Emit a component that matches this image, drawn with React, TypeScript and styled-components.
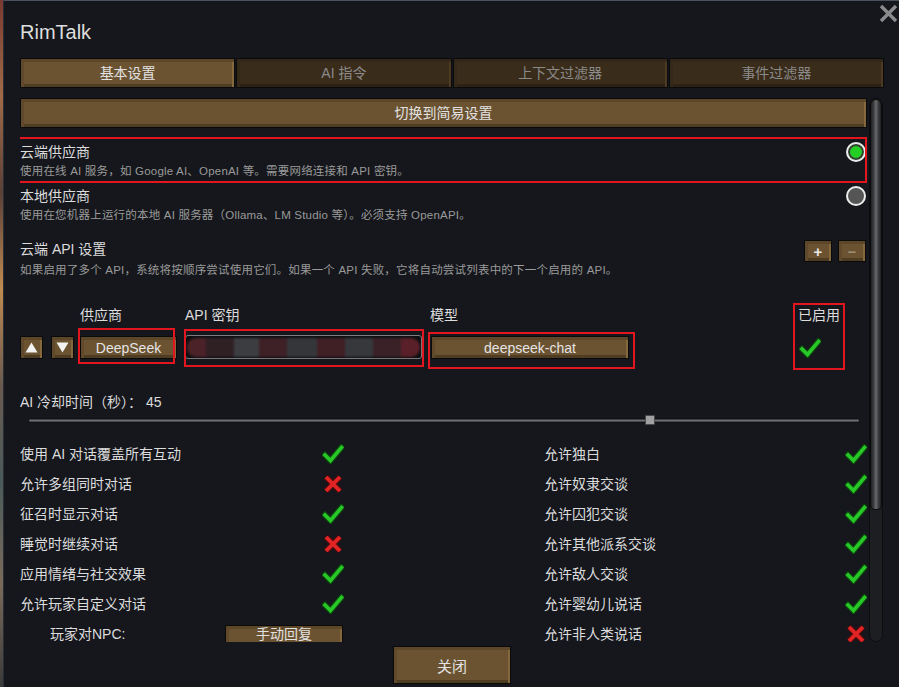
import React from "react";
import styled, { createGlobalStyle, css } from "styled-components";

const GlobalStyle = createGlobalStyle`
  html, body {
    margin: 0;
    padding: 0;
    background: #15171c;
  }
  body {
    font-family: "Liberation Sans", "Noto Sans CJK SC", sans-serif;
    color: #dcdcdc;
  }
  * {
    box-sizing: border-box;
  }
`;

const font = `"Liberation Sans", "Noto Sans CJK SC", sans-serif`;

const wood = css`
  display: flex;
  align-items: center;
  justify-content: center;
  background: #6b5331;
  border: 1px solid #0a0a0a;
  box-shadow: inset 0 3px 0 #5d4729, inset 3px 0 0 #614a2b,
    inset -2px 0 0 #86683d, inset 0 -3px 0 #4e3c23;
  color: #e2e2e2;
  font: 14px ${font};
  padding: 0;
`;

const Screen = styled.div`
  display: flex;
  width: 899px;
  height: 687px;
  overflow: hidden;
`;

const GameEdge = styled.div`
  width: 3px;
  flex: none;
  background: linear-gradient(
    180deg,
    #7a3a30 0%,
    #a06a48 14%,
    #5a4038 28%,
    #c08a50 42%,
    #6a5a50 56%,
    #4a5a5a 70%,
    #7a6a5a 85%,
    #3a3a3a 100%
  );
`;

const Window = styled.div`
  position: relative;
  flex: 1;
  display: flex;
  flex-direction: column;
  background: #15171c;
  border-top: 1px solid #4c535e;
  border-left: 1px solid #2a2e35;
  padding: 17px 15px 0 16px;
  & > * {
    flex-shrink: 0;
  }
`;

const Title = styled.div`
  font: 20px/28px ${font};
  color: #dedede;
  height: 28px;
`;

const CloseX = styled.svg`
  position: absolute;
  top: 3px;
  right: 1px;
`;

const Tabs = styled.div`
  display: grid;
  grid-template-columns: repeat(4, 1fr);
  gap: 1px;
  margin-top: 12px;
  height: 30px;
`;

const Tab = styled.div<{ $active?: boolean }>`
  ${wood};
  padding-bottom: 2px;
  background: ${(p) => (p.$active ? "#6b5331" : "#3a2c1a")};
  box-shadow: ${(p) =>
    p.$active
      ? "inset 0 3px 0 #5d4729, inset 3px 0 0 #614a2b, inset -2px 0 0 #86683d, inset 0 -3px 0 #4e3c23"
      : "inset 0 3px 0 #33261a, inset 3px 0 0 #342818, inset -2px 0 0 #4c3a22, inset 0 -3px 0 #2c2114"};
  color: ${(p) => (p.$active ? "#e2e2e2" : "#8a8a8a")};
`;

const Body = styled.div`
  display: flex;
  gap: 2px;
  margin-top: 10px;
  height: 544px;
`;

const Scroll = styled.div`
  width: 847px;
  flex: none;
  overflow: hidden;
  display: flex;
  flex-direction: column;
  & > * {
    flex-shrink: 0;
  }
`;

const ScrollTrack = styled.div`
  width: 14px;
  flex: none;
  border-radius: 7px;
  background: #1c1e22;
  border: 1px solid #0c0d0f;
  display: flex;
  flex-direction: column;
  align-items: center;
`;

const ScrollThumb = styled.div`
  width: 12px;
  height: 411px;
  border-radius: 6px 6px 5px 5px;
  background: linear-gradient(90deg, #202124 0%, #3a3b3e 25%, #6a6a6c 50%, #3a3b3e 75%, #202124 100%);
  border: 1px solid #0c0c0c;
`;

const WideButton = styled.button`
  ${wood};
  width: 100%;
  height: 30px;
  padding-bottom: 3px;
`;

const Marked = styled.div<{ $inset: string }>`
  position: relative;
  width: fit-content;
  &::after {
    content: "";
    position: absolute;
    inset: ${(p) => p.$inset};
    border: 2px solid #e3161f;
    pointer-events: none;
  }
`;

const ProviderRow = styled(Marked)<{ $gap?: number }>`
  width: auto;
  display: flex;
  justify-content: space-between;
  align-items: flex-start;
  height: 44px;
  padding-top: 3px;
  margin-top: ${(p) => p.$gap ?? 0}px;
  &::after {
    display: ${(p) => (p.$inset ? "block" : "none")};
  }
`;

const TextBlock = styled.div`
  display: flex;
  flex-direction: column;
`;

const Label = styled.div`
  font: 14px/20px ${font};
  color: #dcdcdc;
  white-space: nowrap;
`;

const Hint = styled.div<{ $gap?: number }>`
  font: 11.5px/18px ${font};
  letter-spacing: 0.2px;
  color: #9a9a9a;
  white-space: nowrap;
  margin-top: ${(p) => p.$gap ?? 0}px;
`;

const Radio = styled.span<{ $on?: boolean }>`
  width: 20px;
  height: 20px;
  margin-right: 1px;
  border-radius: 50%;
  border: 2px solid #ececec;
  background: ${(p) => (p.$on ? "#22cf22" : "#555556")};
  box-shadow: ${(p) => (p.$on ? "inset 0 0 0 2px #3a3a3a" : "none")};
`;

const Section = styled.div`
  display: flex;
  justify-content: space-between;
  align-items: flex-start;
  margin-top: 12px;
`;

const SmallButtons = styled.div`
  display: flex;
  gap: 6px;
  margin-top: 1px;
  margin-right: 1px;
`;

const SmallButton = styled.button<{ $dim?: boolean }>`
  ${wood};
  width: 28px;
  height: 22px;
  font-size: 15px;
  font-weight: bold;
  color: ${(p) => (p.$dim ? "#9a8a70" : "#e8e8e8")};
`;

const ApiRow = styled.div`
  display: flex;
  margin-top: 26px;
`;

const Column = styled.div<{ $w: number }>`
  width: ${(p) => p.$w}px;
  flex: none;
  display: flex;
  flex-direction: column;
  gap: 11px;
`;

const MarkedColumn = styled(Marked)<{ $w: number }>`
  width: ${(p) => p.$w}px;
  flex: none;
  display: flex;
  flex-direction: column;
  gap: 11px;
`;

const Control = styled.div<{ $indent?: number }>`
  display: flex;
  align-items: center;
  gap: 8px;
  height: 23px;
  padding-left: ${(p) => p.$indent ?? 0}px;
`;

const ArrowButton = styled.button`
  ${wood};
  width: 23px;
  height: 23px;
`;

const PickButton = styled.button<{ $w: number }>`
  ${wood};
  width: ${(p) => p.$w}px;
  height: 23px;
  color: #e4e4e4;
`;

const KeyField = styled.div`
  width: 237px;
  height: 24px;
  margin-top: -1px;
  border: 1px solid #7c7c7c;
  border-radius: 3px;
  background: #0e0f12;
  display: flex;
  align-items: center;
  padding: 0 1px;
`;

const Smudge = styled.div`
  flex: 1;
  height: 19px;
  border-radius: 9px;
  filter: blur(0.8px);
  background: linear-gradient(
    90deg,
    #4a2228 0 8%,
    #2f2024 8% 20%,
    #3b3d41 20% 31%,
    #3d2126 31% 43%,
    #34363a 43% 56%,
    #401f25 56% 68%,
    #36383c 68% 80%,
    #3a2127 80% 92%,
    #5a2029 92% 100%
  );
`;

const CheckSlot = styled.div`
  height: 23px;
  display: flex;
  align-items: center;
  padding-left: 1px;
`;

const Cooldown = styled(Label)`
  margin-top: 33px;
`;

const Slider = styled.div`
  position: relative;
  height: 10px;
  margin: 3px 7px 0 8px;
`;

const SliderTrack = styled.div`
  position: absolute;
  left: 0;
  right: 0;
  top: 3px;
  height: 5px;
  border-radius: 3px;
  background: linear-gradient(180deg, #2b2c2f, #6a6b6e 50%, #3a3b3e);
  border: 1px solid #101114;
`;

const SliderThumb = styled.div`
  position: absolute;
  top: 0;
  width: 10px;
  height: 10px;
  border-radius: 1px;
  background: #a0a0a2;
  border: 1px solid #4a4a4c;
`;

const Checklist = styled.div`
  display: grid;
  grid-template-columns: 324px 323px;
  column-gap: 200px;
  grid-auto-rows: 30px;
  margin-top: 14px;
`;

const Cell = styled.div`
  display: flex;
  align-items: center;
  justify-content: space-between;
`;

const SubCell = styled.div`
  display: flex;
  align-items: flex-start;
  justify-content: space-between;
  padding-left: 30px;
  & > ${Label} {
    margin-top: 5px;
  }
`;

const ReplyButton = styled.button`
  ${wood};
  width: 118px;
  height: 24px;
  margin-top: 6px;
  margin-right: 1px;
  align-items: flex-start;
  line-height: 17px;
`;

const Footer = styled.div`
  display: flex;
  justify-content: center;
  margin-top: 4px;
`;

const CloseButton = styled.button`
  ${wood};
  width: 118px;
  height: 38px;
  font-size: 15px;
`;

const Check = () => (
  <svg width="22" height="20" viewBox="0 0 22 20">
    <path d="M3 11 L8.5 16.5 L19.5 3.5" fill="none" stroke="#0d4a0d" strokeWidth="6" strokeLinecap="square" />
    <path d="M3 11 L8.5 16.5 L19.5 3.5" fill="none" stroke="#27c827" strokeWidth="3.6" strokeLinecap="square" />
  </svg>
);

const Cross = () => (
  <svg width="22" height="20" viewBox="0 0 22 20">
    <path d="M4 3 L18 17 M18 3 L4 17" fill="none" stroke="#5a0c0c" strokeWidth="6" />
    <path d="M4 3 L18 17 M18 3 L4 17" fill="none" stroke="#e22424" strokeWidth="3.8" />
  </svg>
);

const Triangle = ({ up }: { up?: boolean }) => (
  <svg width="13" height="11" viewBox="0 0 13 11">
    <polygon points={up ? "6.5,0.5 12.5,10.5 0.5,10.5" : "0.5,0.5 12.5,0.5 6.5,10.5"} fill="#f2f2f2" />
  </svg>
);

const leftToggles: [string, boolean][] = [
  ["使用 AI 对话覆盖所有互动", true],
  ["允许多组同时对话", false],
  ["征召时显示对话", true],
  ["睡觉时继续对话", false],
  ["应用情绪与社交效果", true],
  ["允许玩家自定义对话", true],
];

const rightToggles: [string, boolean][] = [
  ["允许独白", true],
  ["允许奴隶交谈", true],
  ["允许囚犯交谈", true],
  ["允许其他派系交谈", true],
  ["允许敌人交谈", true],
  ["允许婴幼儿说话", true],
  ["允许非人类说话", false],
];

const tabs = ["基本设置", "AI 指令", "上下文过滤器", "事件过滤器"];

const cooldown = 45;
const cooldownMax = 60;
const sliderWidth = 832;

export default function App() {
  const cells: React.ReactNode[] = [];
  for (let i = 0; i < 7; i++) {
    const left = leftToggles[i];
    cells.push(
      left ? (
        <Cell key={`l${i}`}>
          <Label>{left[0]}</Label>
          {left[1] ? <Check /> : <Cross />}
        </Cell>
      ) : (
        <SubCell key={`l${i}`}>
          <Label>玩家对NPC:</Label>
          <ReplyButton>手动回复</ReplyButton>
        </SubCell>
      )
    );
    const right = rightToggles[i];
    cells.push(
      <Cell key={`r${i}`}>
        <Label>{right[0]}</Label>
        {right[1] ? <Check /> : <Cross />}
      </Cell>
    );
  }

  return (
    <Screen>
      <GlobalStyle />
      <GameEdge />
      <Window>
        <Title>RimTalk</Title>
        <CloseX width="19" height="19" viewBox="0 0 19 19">
          <path d="M2 2 L17 17 M17 2 L2 17" stroke="#8a8b8d" strokeWidth="3.4" />
        </CloseX>

        <Tabs>
          {tabs.map((t, i) => (
            <Tab key={t} $active={i === 0}>
              {t}
            </Tab>
          ))}
        </Tabs>

        <Body>
          <Scroll>
            <WideButton>切换到简易设置</WideButton>

            <ProviderRow $inset="-2px 0 0 -8px" $gap={11}>
              <TextBlock>
                <Label>云端供应商</Label>
                <Hint>使用在线 AI 服务，如 Google AI、OpenAI 等。需要网络连接和 API 密钥。</Hint>
              </TextBlock>
              <Radio $on />
            </ProviderRow>

            <ProviderRow $inset="">
              <TextBlock>
                <Label>本地供应商</Label>
                <Hint>使用在您机器上运行的本地 AI 服务器（Ollama、LM Studio 等）。必须支持 OpenAPI。</Hint>
              </TextBlock>
              <Radio />
            </ProviderRow>

            <Section>
              <TextBlock>
                <Label>云端 API 设置</Label>
                <Hint $gap={2}>
                  如果启用了多个 API，系统将按顺序尝试使用它们。如果一个 API 失败，它将自动尝试列表中的下一个启用的 API。
                </Hint>
              </TextBlock>
              <SmallButtons>
                <SmallButton>+</SmallButton>
                <SmallButton $dim>−</SmallButton>
              </SmallButtons>
            </Section>

            <ApiRow>
              <Column $w={60}>
                <Label>&nbsp;</Label>
                <Control>
                  <ArrowButton>
                    <Triangle up />
                  </ArrowButton>
                  <ArrowButton>
                    <Triangle />
                  </ArrowButton>
                </Control>
              </Column>
              <Column $w={105}>
                <Label>供应商</Label>
                <Marked $inset="-8px 2px -5px -2px">
                  <PickButton $w={97}>DeepSeek</PickButton>
                </Marked>
              </Column>
              <Column $w={245}>
                <Label>API 密钥</Label>
                <Marked $inset="-7px -2px -8px -1px">
                  <KeyField>
                    <Smudge />
                  </KeyField>
                </Marked>
              </Column>
              <Column $w={368}>
                <Label>模型</Label>
                <Control $indent={1}>
                  <Marked $inset="-4px -6px -10px -3px">
                    <PickButton $w={198}>deepseek-chat</PickButton>
                  </Marked>
                </Control>
              </Column>
              <MarkedColumn $w={47} $inset="-2px 0 -11px -5px">
                <Label>已启用</Label>
                <CheckSlot>
                  <Check />
                </CheckSlot>
              </MarkedColumn>
            </ApiRow>

            <Cooldown>AI 冷却时间（秒）： {cooldown}</Cooldown>
            <Slider>
              <SliderTrack />
              <SliderThumb style={{ left: (cooldown / cooldownMax) * (sliderWidth - 10) }} />
            </Slider>

            <Checklist>{cells}</Checklist>
          </Scroll>
          <ScrollTrack>
            <ScrollThumb />
          </ScrollTrack>
        </Body>

        <Footer>
          <CloseButton>关闭</CloseButton>
        </Footer>
      </Window>
    </Screen>
  );
}
